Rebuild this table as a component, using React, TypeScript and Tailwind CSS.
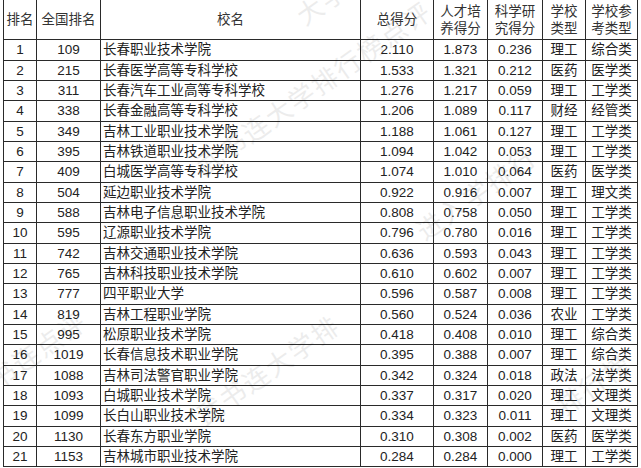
import React from "react";

const rows: [string, string, string, string, string, string, string, string][] = [
  ["1", "109", "长春职业技术学院", "2.110", "1.873", "0.236", "理工", "综合类"],
  ["2", "215", "长春医学高等专科学校", "1.533", "1.321", "0.212", "医药", "医学类"],
  ["3", "311", "长春汽车工业高等专科学校", "1.276", "1.217", "0.059", "理工", "工学类"],
  ["4", "338", "长春金融高等专科学校", "1.206", "1.089", "0.117", "财经", "经管类"],
  ["5", "349", "吉林工业职业技术学院", "1.188", "1.061", "0.127", "理工", "工学类"],
  ["6", "395", "吉林铁道职业技术学院", "1.094", "1.042", "0.053", "理工", "工学类"],
  ["7", "409", "白城医学高等专科学校", "1.074", "1.010", "0.064", "医药", "医学类"],
  ["8", "504", "延边职业技术学院", "0.922", "0.916", "0.007", "理工", "理文类"],
  ["9", "588", "吉林电子信息职业技术学院", "0.808", "0.758", "0.050", "理工", "工学类"],
  ["10", "595", "辽源职业技术学院", "0.796", "0.780", "0.016", "理工", "工学类"],
  ["11", "742", "吉林交通职业技术学院", "0.636", "0.593", "0.043", "理工", "工学类"],
  ["12", "765", "吉林科技职业技术学院", "0.610", "0.602", "0.007", "理工", "工学类"],
  ["13", "777", "四平职业大学", "0.596", "0.587", "0.008", "理工", "工学类"],
  ["14", "819", "吉林工程职业学院", "0.560", "0.524", "0.036", "农业", "工学类"],
  ["15", "995", "松原职业技术学院", "0.418", "0.408", "0.010", "理工", "综合类"],
  ["16", "1019", "长春信息技术职业学院", "0.395", "0.388", "0.007", "理工", "综合类"],
  ["17", "1088", "吉林司法警官职业学院", "0.342", "0.324", "0.018", "政法", "法学类"],
  ["18", "1093", "白城职业技术学院", "0.337", "0.317", "0.020", "理工", "文理类"],
  ["19", "1099", "长白山职业技术学院", "0.334", "0.323", "0.011", "理工", "文理类"],
  ["20", "1130", "长春东方职业学院", "0.310", "0.308", "0.002", "医药", "医学类"],
  ["21", "1153", "吉林城市职业技术学院", "0.284", "0.284", "0.000", "理工", "工学类"],
];

const widths = ["w-[32px]", "w-[63px]", "w-[259px]", "w-[72px]", "w-[53px]", "w-[54px]", "w-[42px]", "w-[51px]"];

const font = "font-['Liberation_Sans','Noto_Sans_CJK_SC',sans-serif]";

function Header() {
  const cells: React.ReactNode[] = [
    "排名",
    "全国排名",
    "校名",
    "总得分",
    <>人才培<br />养得分</>,
    <>科学研<br />究得分</>,
    <>学校<br />类型</>,
    <>学校参<br />考类型</>,
  ];
  return (
    <div className="flex gap-px h-[39px]">
      {cells.map((c, i) => (
        <div
          key={i}
          className={`${widths[i]} shrink-0 bg-white flex items-center justify-center text-center text-[13.5px] leading-[17px] text-[#333]`}
        >
          <div>{c}</div>
        </div>
      ))}
    </div>
  );
}

function Row({ r, idx }: { r: string[]; idx: number }) {
  const h = idx % 3 === 0 ? "h-[20px]" : "h-[19px]";
  return (
    <div className={`flex gap-px ${h}`}>
      {r.map((c, i) => (
        <div
          key={i}
          className={`${widths[i]} shrink-0 bg-white flex items-center ${
            i === 2 ? "justify-start pl-[2px]" : "justify-center"
          } text-[13.5px] leading-none text-[#222] whitespace-nowrap`}
        >
          {c}
        </div>
      ))}
    </div>
  );
}

const marks: { cls: string; text: string }[] = [
  { cls: "left-[300px] top-[0px]", text: "大学排行榜" },
  { cls: "left-[200px] top-[150px]", text: "武书连大学排行榜点评" },
  { cls: "left-[420px] top-[215px]", text: "进入学排行" },
  { cls: "left-[200px] top-[400px]", text: "武书连大学排" },
  { cls: "left-[-30px] top-[380px]", text: "武书连点评" },
  { cls: "left-[560px] top-[390px]", text: "排行榜" },
];

export default function App() {
  return (
    <div className={`relative w-[641px] h-[468px] bg-white overflow-hidden ${font}`}>
      <div className="ml-[3px] w-fit bg-[#2a2a2a] px-px pb-px flex flex-col gap-px">
        <Header />
        {rows.map((r, i) => (
          <Row key={i} r={r} idx={i} />
        ))}
      </div>
      {marks.map((m, i) => (
        <div
          key={i}
          className={`absolute ${m.cls} pointer-events-none -rotate-[35deg] origin-left text-[26px] text-[#000] opacity-[0.07] whitespace-nowrap tracking-[2px]`}
        >
          {m.text}
        </div>
      ))}
    </div>
  );
}
